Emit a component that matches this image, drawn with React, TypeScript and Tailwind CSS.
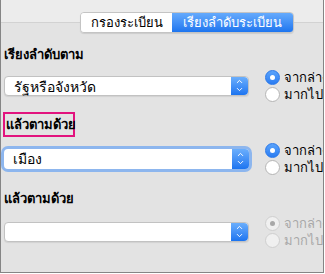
import { ChevronUp, ChevronDown } from 'lucide-react';

const FONT = { fontFamily: 'Tahoma, "Noto Sans", "DejaVu Sans", sans-serif' };

function Stepper() {
  return (
    <div className="w-[17px] h-full shrink-0 flex flex-col items-center justify-center rounded-r-[4px] bg-gradient-to-b from-[#6aaefc] to-[#1b74f0]">
      <ChevronUp size={9} strokeWidth={2.5} className="text-white -mb-[1px]" />
      <ChevronDown size={9} strokeWidth={2.5} className="text-white" />
    </div>
  );
}

function Select({ value, focused }: { value: string; focused?: boolean }) {
  return (
    <div
      className={`w-[245px] h-[20px] shrink-0 flex rounded-[4px] bg-white ${
        focused ? 'ring-[3px] ring-[#8db6ee]' : 'border border-[#c2c2c2] shadow-[0_1px_1px_rgba(0,0,0,0.08)]'
      }`}
    >
      <div className="flex-1 pl-[9px] text-[14px] leading-[19px] text-black">{value}</div>
      <Stepper />
    </div>
  );
}

function Radio({ checked, disabled, label }: { checked?: boolean; disabled?: boolean; label: string }) {
  let circle = 'bg-white border border-[#b5b5b5]';
  if (checked && !disabled) circle = 'bg-gradient-to-b from-[#5aa3fb] to-[#2a7cf2] border border-[#2a78ea]';
  if (disabled) circle = 'bg-[#f0f0f0] border border-[#cfcfcf]';
  return (
    <div className="flex items-center h-[16px] whitespace-nowrap">
      <div className={`w-[15px] h-[15px] rounded-full flex items-center justify-center shrink-0 ${circle}`}>
        {checked && <div className={`w-[5px] h-[5px] rounded-full ${disabled ? 'bg-[#a8a8a8]' : 'bg-white'}`} />}
      </div>
      <span className={`ml-[4px] text-[13px] leading-[16px] ${disabled ? 'text-[#a8a8a8]' : 'text-black'}`}>{label}</span>
    </div>
  );
}

function Row({ value, focused, disabled }: { value: string; focused?: boolean; disabled?: boolean }) {
  return (
    <div className="flex items-center">
      <Select value={value} focused={focused} />
      <div className="ml-[16px] flex flex-col gap-[1px]">
        <Radio checked disabled={disabled} label="จากล่างขึ้นบน" />
        <Radio disabled={disabled} label="มากไปหาน้อย" />
      </div>
    </div>
  );
}

export default function App() {
  return (
    <div className="w-[325px] h-[274px] bg-white" style={FONT}>
      <div className="relative w-[324px] h-[273px] bg-[#e3e3e3] border-l border-r border-b border-[#858585] overflow-hidden">
        <div className="h-[23px] bg-[#ececec] border-b border-[#d2d2d2]" />
        <div className="absolute left-[79px] top-[12px] flex h-[21px] rounded-[4px] border border-[#c4c4c4] shadow-[0_1px_1px_rgba(0,0,0,0.1)] overflow-hidden text-[13px] leading-[19px]">
          <div className="w-[91px] bg-white text-black text-center">กรองระเบียน</div>
          <div className="w-[121px] bg-gradient-to-b from-[#65aafc] to-[#1d75ef] text-white text-center">เรียงลำดับระเบียน</div>
        </div>

        <div className="pl-[2px]">
          <div className="mt-[22px] pl-[1px] text-[13px] font-bold leading-[18px] text-black">เรียงลำดับตาม</div>
          <div className="mt-[6px] pl-[1px]">
            <Row value="รัฐหรือจังหวัด" />
          </div>

          <div className="mt-[10px] w-[72px] border-2 border-[#e2137e] pl-[1px] h-[25px] text-[13px] font-bold leading-[20px] text-black whitespace-nowrap">
            แล้วตามด้วย
          </div>
          <div className="mt-[5px] pl-[1px]">
            <Row value="เมือง" focused />
          </div>

          <div className="mt-[14px] pl-[1px] text-[13px] font-bold leading-[18px] text-black">แล้วตามด้วย</div>
          <div className="mt-[8px] pl-[1px]">
            <Row value="" disabled />
          </div>
        </div>
      </div>
    </div>
  );
}
